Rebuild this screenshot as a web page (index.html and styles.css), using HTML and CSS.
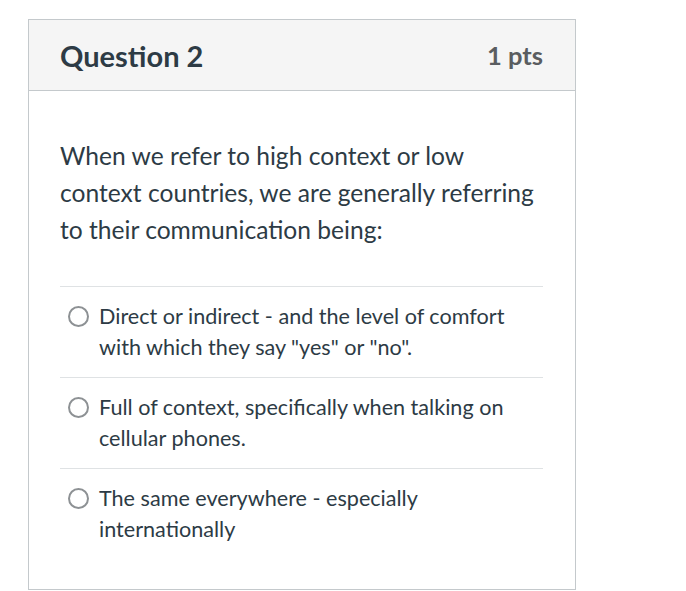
FILE: index.html
```html
<!DOCTYPE html>
<html>
<head>
<meta charset="utf-8">
<link rel="stylesheet" href="styles.css">
</head>
<body>
<div class="card">
  <div class="header">
    <span class="title">Question 2</span>
    <span class="pts">1 pts</span>
  </div>
  <div class="body">
    <p class="question">When we refer to high context or low context countries, we are generally referring to their communication being:</p>
    <div class="answers">
      <div class="answer">
        <span class="radio"></span>
        <span class="label">Direct or indirect - and the level of comfort with which they say "yes" or "no".</span>
      </div>
      <div class="answer">
        <span class="radio"></span>
        <span class="label">Full of context, specifically when talking on cellular phones.</span>
      </div>
      <div class="answer">
        <span class="radio"></span>
        <span class="label">The same everywhere - especially internationally</span>
      </div>
    </div>
  </div>
</div>
</body>
</html>
```
FILE: styles.css
```css
html, body {
  margin: 0;
  padding: 0;
  background: #ffffff;
}
body {
  font-family: Lato, "Liberation Sans", sans-serif;
  padding: 19px 0 0 28px;
}
.card {
  width: 546px;
  height: 569px;
  border: 1px solid #c4c9cc;
  box-sizing: content-box;
}
.header {
  height: 70px;
  background: #f5f5f5;
  border-bottom: 1px solid #c4c9cc;
  display: flex;
  align-items: center;
  justify-content: space-between;
  padding: 0 32px 0 31px;
}
.title {
  font-size: 29px;
  font-weight: 700;
  color: #2d3b45;
}
.pts {
  font-size: 25.5px;
  font-weight: 700;
  color: #5a5d60;
}
.body {
  padding: 46px 32px 0 31px;
}
.question {
  margin: 0 0 38px;
  font-size: 24.6px;
  line-height: 37px;
  color: #2d3b45;
}
.answer {
  border-top: 1px solid #dfe2e4;
  display: flex;
  align-items: flex-start;
  padding: 14px 0 14px 8px;
}
.radio {
  width: 17px;
  height: 17px;
  border: 2px solid #8d9194;
  border-radius: 50%;
  flex: none;
  margin: 5px 10px 0 0;
}
.label {
  font-size: 21.6px;
  line-height: 31px;
  color: #2d3b45;
}
```
